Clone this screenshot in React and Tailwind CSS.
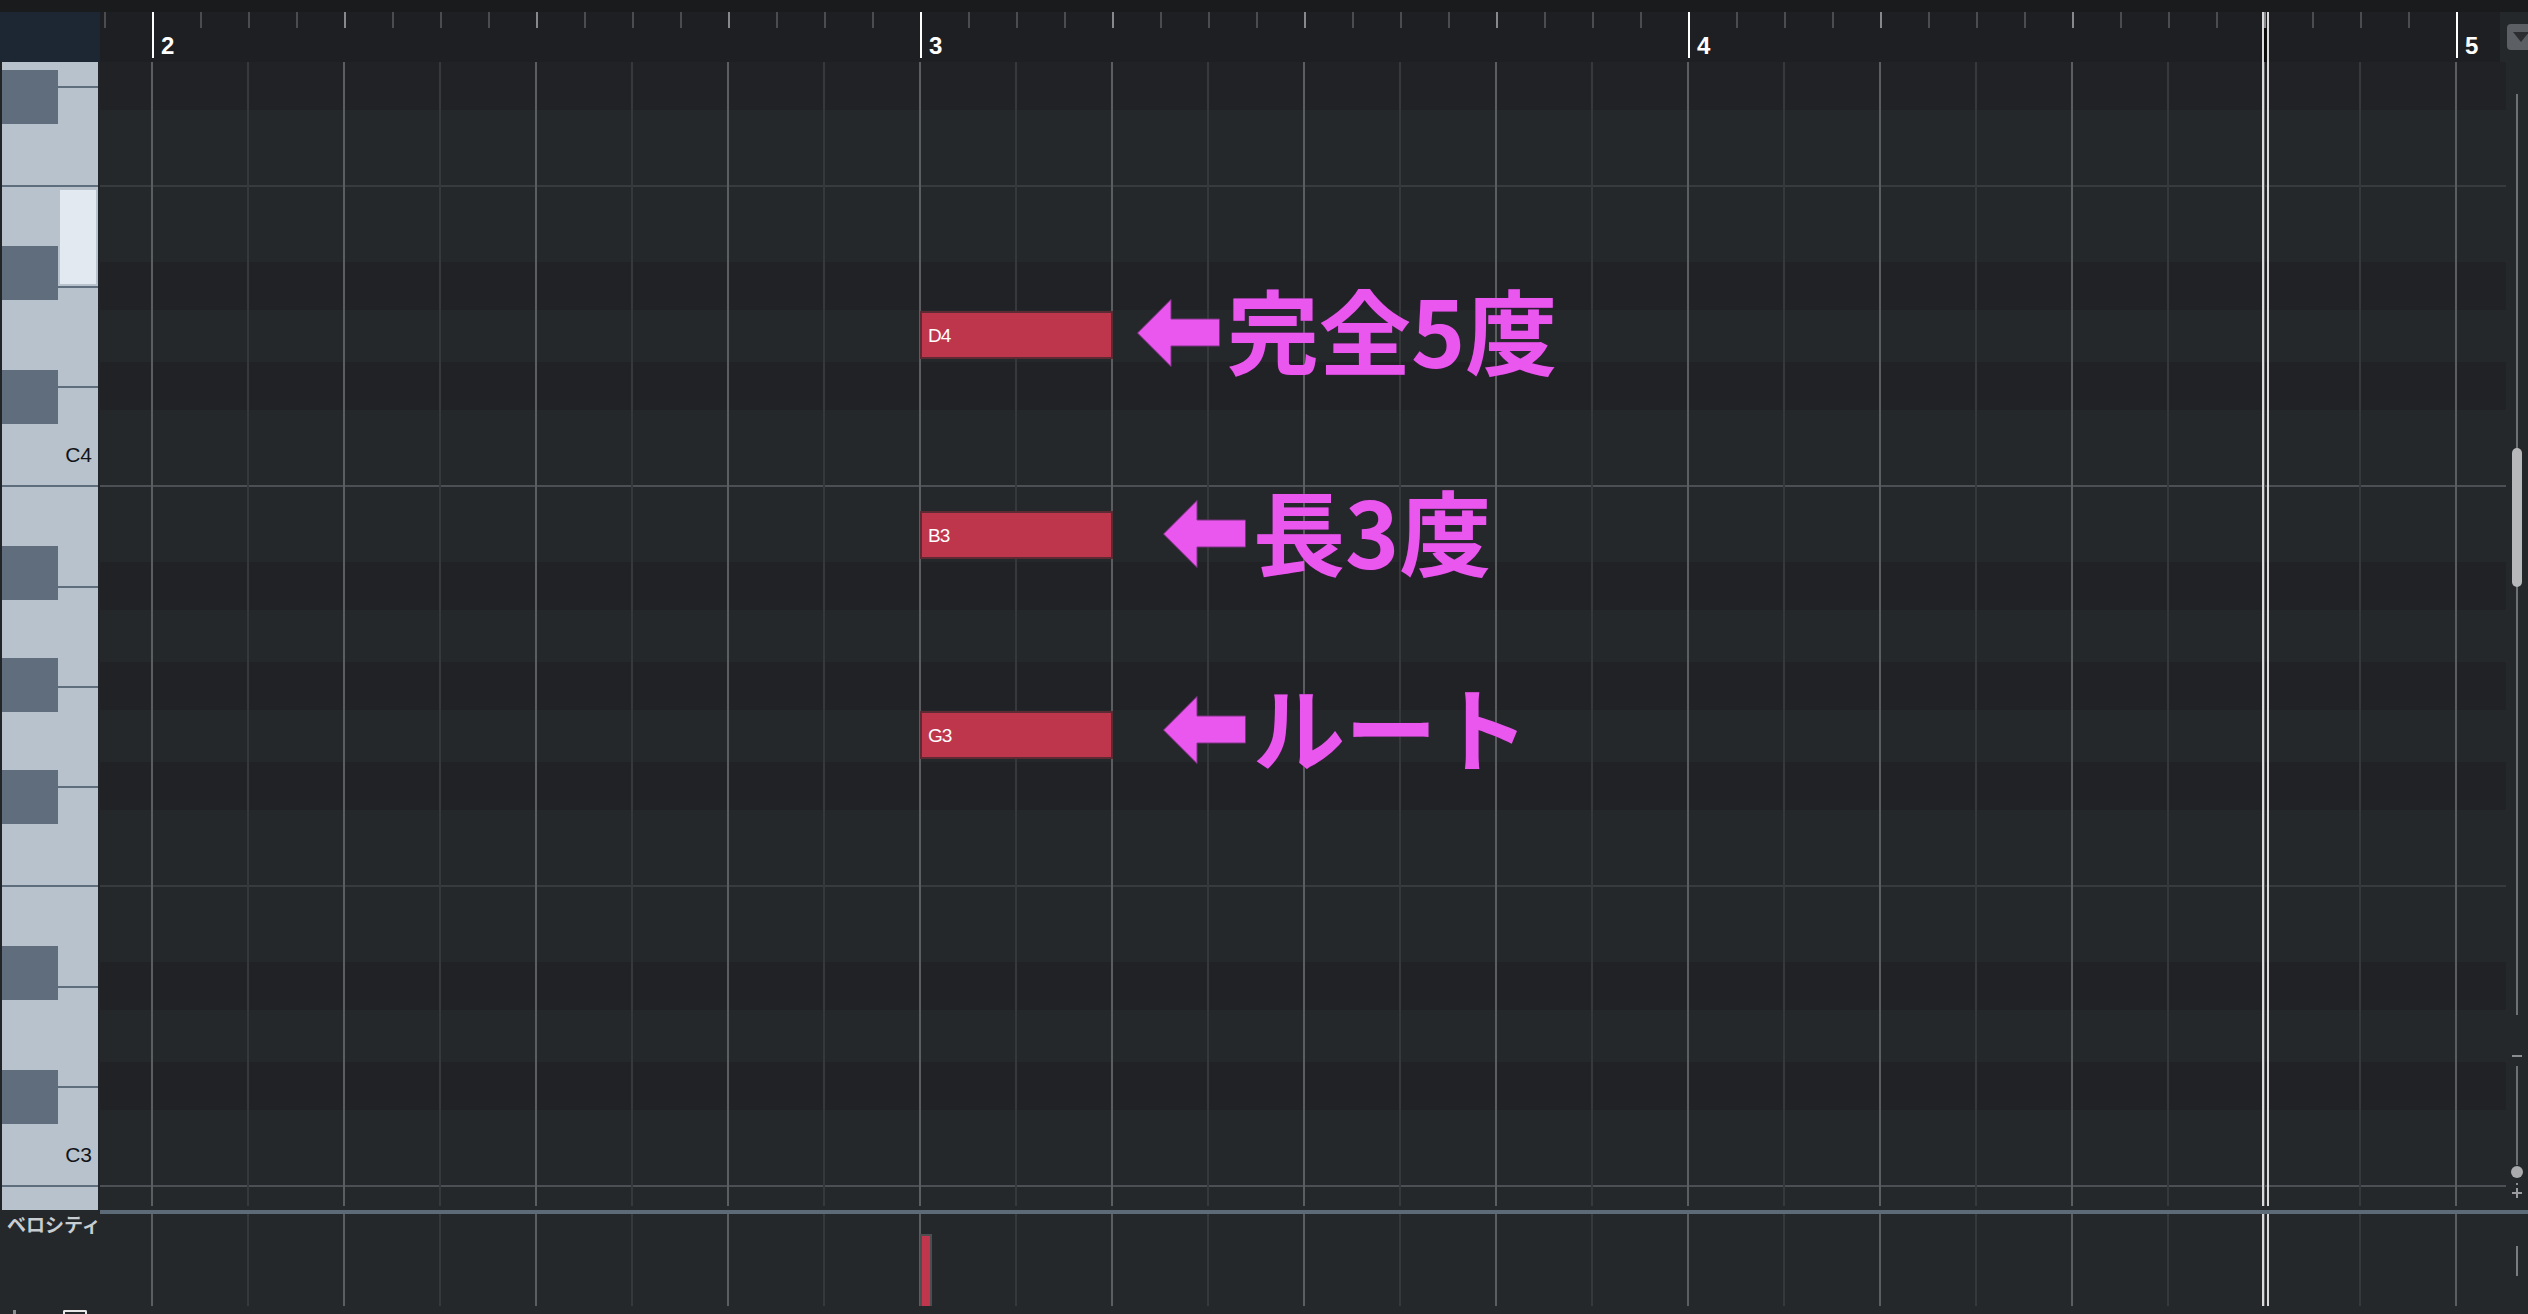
import React from "react";

const sans = "font-['Liberation_Sans',Arial,sans-serif]";
const jp = "font-['Noto_Sans_CJK_JP','Noto_Sans',sans-serif]";

// grid rows, top to bottom (dark = black-key rows)
const BANDS = [
  "h-[48px] bg-[#212226]",
  "h-[75px] bg-[#25282b]",
  "h-[77px] bg-[#25282b] border-t-2 border-[#383b3e]",
  "h-[48px] bg-[#212226]",
  "h-[52px] bg-[#25282b]",
  "h-[48px] bg-[#212226]",
  "h-[75px] bg-[#25282b]",
  "h-[77px] bg-[#25282b] border-t-2 border-[#4c4f53]",
  "h-[48px] bg-[#212226]",
  "h-[52px] bg-[#25282b]",
  "h-[48px] bg-[#212226]",
  "h-[52px] bg-[#25282b]",
  "h-[48px] bg-[#212226]",
  "h-[75px] bg-[#25282b]",
  "h-[77px] bg-[#25282b] border-t-2 border-[#383b3e]",
  "h-[48px] bg-[#212226]",
  "h-[52px] bg-[#25282b]",
  "h-[48px] bg-[#212226]",
  "h-[75px] bg-[#25282b]",
  "h-[21px] bg-[#25282b] border-t-2 border-[#4c4f53]",
];

const WHITE_KEYS = [
  { h: "h-[24px]" },
  { h: "h-[99px]" },
  { h: "h-[101px]", hi: true },
  { h: "h-[100px]" },
  { h: "h-[99px]", label: "C4" },
  { h: "h-[101px]" },
  { h: "h-[100px]" },
  { h: "h-[100px]" },
  { h: "h-[99px]" },
  { h: "h-[101px]" },
  { h: "h-[100px]" },
  { h: "h-[99px]", label: "C3" },
  { h: "h-[25px]" },
];

const BLACK_KEYS = [
  "top-[8px]",
  "top-[184px]",
  "top-[308px]",
  "top-[484px]",
  "top-[596px]",
  "top-[708px]",
  "top-[884px]",
  "top-[1008px]",
];

const NOTES = [
  { name: "D4", top: "top-[249px]" },
  { name: "B3", top: "top-[449px]" },
  { name: "G3", top: "top-[649px]" },
];

const NOTES_TEXT = [
  { text: "完全5度", pos: "left-[1037px] top-[225px]" },
  { text: "長3度", pos: "left-[1063px] top-[426px]" },
  { text: "ルート", pos: "left-[1063px] top-[622px]" },
];

function GridLines() {
  return (
    <>
      <div className="w-[51px] shrink-0" />
      {Array.from({ length: 25 }, (_, i) => (
        <div
          key={i}
          className={
            i % 2 === 0
              ? "w-[96px] shrink-0 border-l-2 border-[#5b5d60]"
              : "w-[96px] shrink-0 border-l-2 border-[#36383b]"
          }
        />
      ))}
    </>
  );
}

function Locator() {
  return (
    <>
      <div className="absolute left-[2162px] top-0 bottom-0 w-[2px] bg-[#dadada]" />
      <div className="absolute left-[2167px] top-0 bottom-0 w-[2px] bg-[#dadada]" />
    </>
  );
}

function Ruler() {
  return (
    <div className="relative w-[2400px] shrink-0 overflow-hidden bg-[#1e1f22] flex">
      <div className="w-[4px] shrink-0" />
      {Array.from({ length: 50 }, (_, k) => {
        if ((k - 1) % 16 === 0) {
          return (
            <div key={k} className="w-[48px] shrink-0 flex">
              <div className="w-[2px] h-[46px] bg-white" />
              <span className={`${sans} ml-[7px] mt-[22px] text-[24px] font-bold leading-none text-white`}>
                {(k - 1) / 16 + 2}
              </span>
            </div>
          );
        }
        return (
          <div key={k} className="w-[48px] shrink-0">
            <div
              className={
                (k - 1) % 4 === 0
                  ? "w-[2px] h-[16px] bg-[#86888b]"
                  : "w-[2px] h-[16px] bg-[#4a4c4f]"
              }
            />
          </div>
        );
      })}
      <div className="absolute left-[2164px] top-[16px] w-[3px] h-[34px] bg-[#0b0b0c]" />
      <Locator />
    </div>
  );
}

function Keyboard() {
  return (
    <div className="relative ml-[2px] w-[96px] h-[1148px] shrink-0 bg-[#b8c2cc] flex flex-col">
      {WHITE_KEYS.map((key, i) => (
        <div
          key={i}
          className={`${key.h} shrink-0 flex justify-end ${
            i === 0 ? "" : "border-t-2 border-[#5f6e7d]"
          } ${key.label ? "items-end pr-[6px] pb-[20px]" : "pr-[2px] pt-[3px]"}`}
        >
          {key.hi && <div className="w-[36px] h-[94px] bg-[#e3e9f1]" />}
          {key.label && (
            <span className={`${sans} text-[21px] leading-none text-[#111418]`}>{key.label}</span>
          )}
        </div>
      ))}
      {BLACK_KEYS.map((top) => (
        <div key={top} className={`absolute left-0 ${top} w-[56px] h-[54px] bg-[#5f6d7d]`} />
      ))}
    </div>
  );
}

function Arrow() {
  return (
    <svg width="83" height="68" viewBox="0 0 83 68" className="shrink-0">
      <polygon
        points="0.5,34 34,0.5 34,20 82.5,20 82.5,47 34,47 34,67.5"
        fill="#e957ef"
        stroke="#7c3282"
        strokeWidth="1"
        strokeLinejoin="miter"
      />
    </svg>
  );
}

function Grid() {
  return (
    <div className="relative w-[2406px] h-[1144px] shrink-0 overflow-hidden">
      <div className="flex flex-col">
        {BANDS.map((cls, i) => (
          <div key={i} className={`${cls} shrink-0`} />
        ))}
      </div>
      <div className="absolute inset-0 flex">
        <GridLines />
      </div>
      <Locator />

      {NOTES.map((n) => (
        <div
          key={n.name}
          className={`absolute left-[820px] ${n.top} w-[193px] h-[48px] bg-[#be364b] border-2 border-[#5c2a33] flex items-center pl-[6px]`}
        >
          <span className={`${sans} text-[19px] leading-none tracking-[-1px] text-white`}>{n.name}</span>
        </div>
      ))}

      {NOTES_TEXT.map((a) => (
        <div key={a.text} className={`absolute ${a.pos} h-[92px] flex items-center`}>
          <Arrow />
          <span
            className={`${jp} ml-[7px] relative -top-[5px] text-[92px] font-bold leading-none whitespace-nowrap text-[#e957ef] [text-shadow:0_0_1px_#6a2470]`}
          >
            {a.text}
          </span>
        </div>
      ))}
    </div>
  );
}

function ScrollPanel() {
  return (
    <div className="w-[22px] h-[1148px] shrink-0 flex flex-col items-center pt-[32px] bg-[#25282b]">
      <div className="relative w-[2px] h-[921px] bg-[#6e7073]">
        <div className="absolute -left-[4px] top-[354px] w-[10px] h-[139px] rounded-full bg-[#b6b8ba]" />
      </div>
      <div className="mt-[40px] w-[10px] h-[2px] bg-[#8a8c8f]" />
      <div className="mt-[9px] w-[2px] h-[99px] bg-[#6e7073]" />
      <div className="mt-[1px] w-[12px] h-[12px] rounded-full bg-[#a9abad]" />
      <div className="mt-[5px] w-[2px] h-[2px] bg-[#8a8c8f]" />
      <svg width="10" height="10" viewBox="0 0 10 10" className="mt-[3px]">
        <path d="M0 5H10M5 0V10" stroke="#9a9c9f" strokeWidth="2" />
      </svg>
    </div>
  );
}

export default function App() {
  return (
    <div className="w-[2528px] h-[1314px] overflow-hidden bg-[#1a1b1d] flex flex-col">
      <div className="h-[12px] shrink-0 bg-[#1a1b1d]" />

      <div className="flex h-[50px] shrink-0">
        <div className="w-[100px] shrink-0 bg-[#1d2733]" />
        <Ruler />
        <div className="w-[28px] shrink-0 bg-[#25282b] pt-[12px] pl-[7px] overflow-hidden">
          <div className="w-[24px] h-[26px] rounded-l-[4px] bg-[#5c5f63] flex items-center pl-[6px]">
            <svg width="16" height="10" viewBox="0 0 16 10">
              <polygon points="0,0 16,0 8,10" fill="#2b2d30" />
            </svg>
          </div>
        </div>
      </div>

      <div className="flex flex-1">
        <div className="w-[100px] shrink-0 flex flex-col bg-[#222528]">
          <Keyboard />
          <div className="flex-1 flex flex-col bg-[#25282b] pt-[4px] overflow-hidden">
            <span className={`${jp} pl-[7px] text-[19px] font-bold leading-none whitespace-nowrap text-[#c8cdd2]`}>
              ベロシティ
            </span>
            <div className="mt-auto h-[5px] flex items-end">
              <div className="ml-[13px] w-[3px] h-[4px] bg-[#8a8c8f]" />
              <div className="ml-[47px] w-[24px] h-[4px] border-t-2 border-x-2 border-[#e8e8e8] rounded-t-[2px]" />
            </div>
          </div>
        </div>

        <div className="w-[2406px] shrink-0 flex flex-col">
          <Grid />
          <div className="h-[4px] shrink-0 bg-[#25282b]" />
          <div className="h-[4px] shrink-0 bg-[#5d6a78]" />
          <div className="relative h-[100px] shrink-0 bg-[#25282b]">
            <div className="absolute left-0 right-0 top-0 h-[92px] flex">
              <GridLines />
            </div>
            <div className="absolute left-[2162px] top-0 h-[92px] w-[2px] bg-[#dadada]" />
            <div className="absolute left-[2167px] top-0 h-[92px] w-[2px] bg-[#dadada]" />
            <div className="absolute left-[820px] top-[20px] w-[12px] h-[72px] bg-[#c0364c] border-2 border-b-0 border-[#4e4e50]" />
          </div>
        </div>

        <div className="w-[22px] shrink-0 flex flex-col">
          <ScrollPanel />
          <div className="h-[4px] shrink-0 bg-[#5d6a78]" />
          <div className="flex-1 flex justify-center pt-[32px] bg-[#25282b]">
            <div className="w-[2px] h-[30px] bg-[#7a7c7f]" />
          </div>
        </div>
      </div>
    </div>
  );
}
